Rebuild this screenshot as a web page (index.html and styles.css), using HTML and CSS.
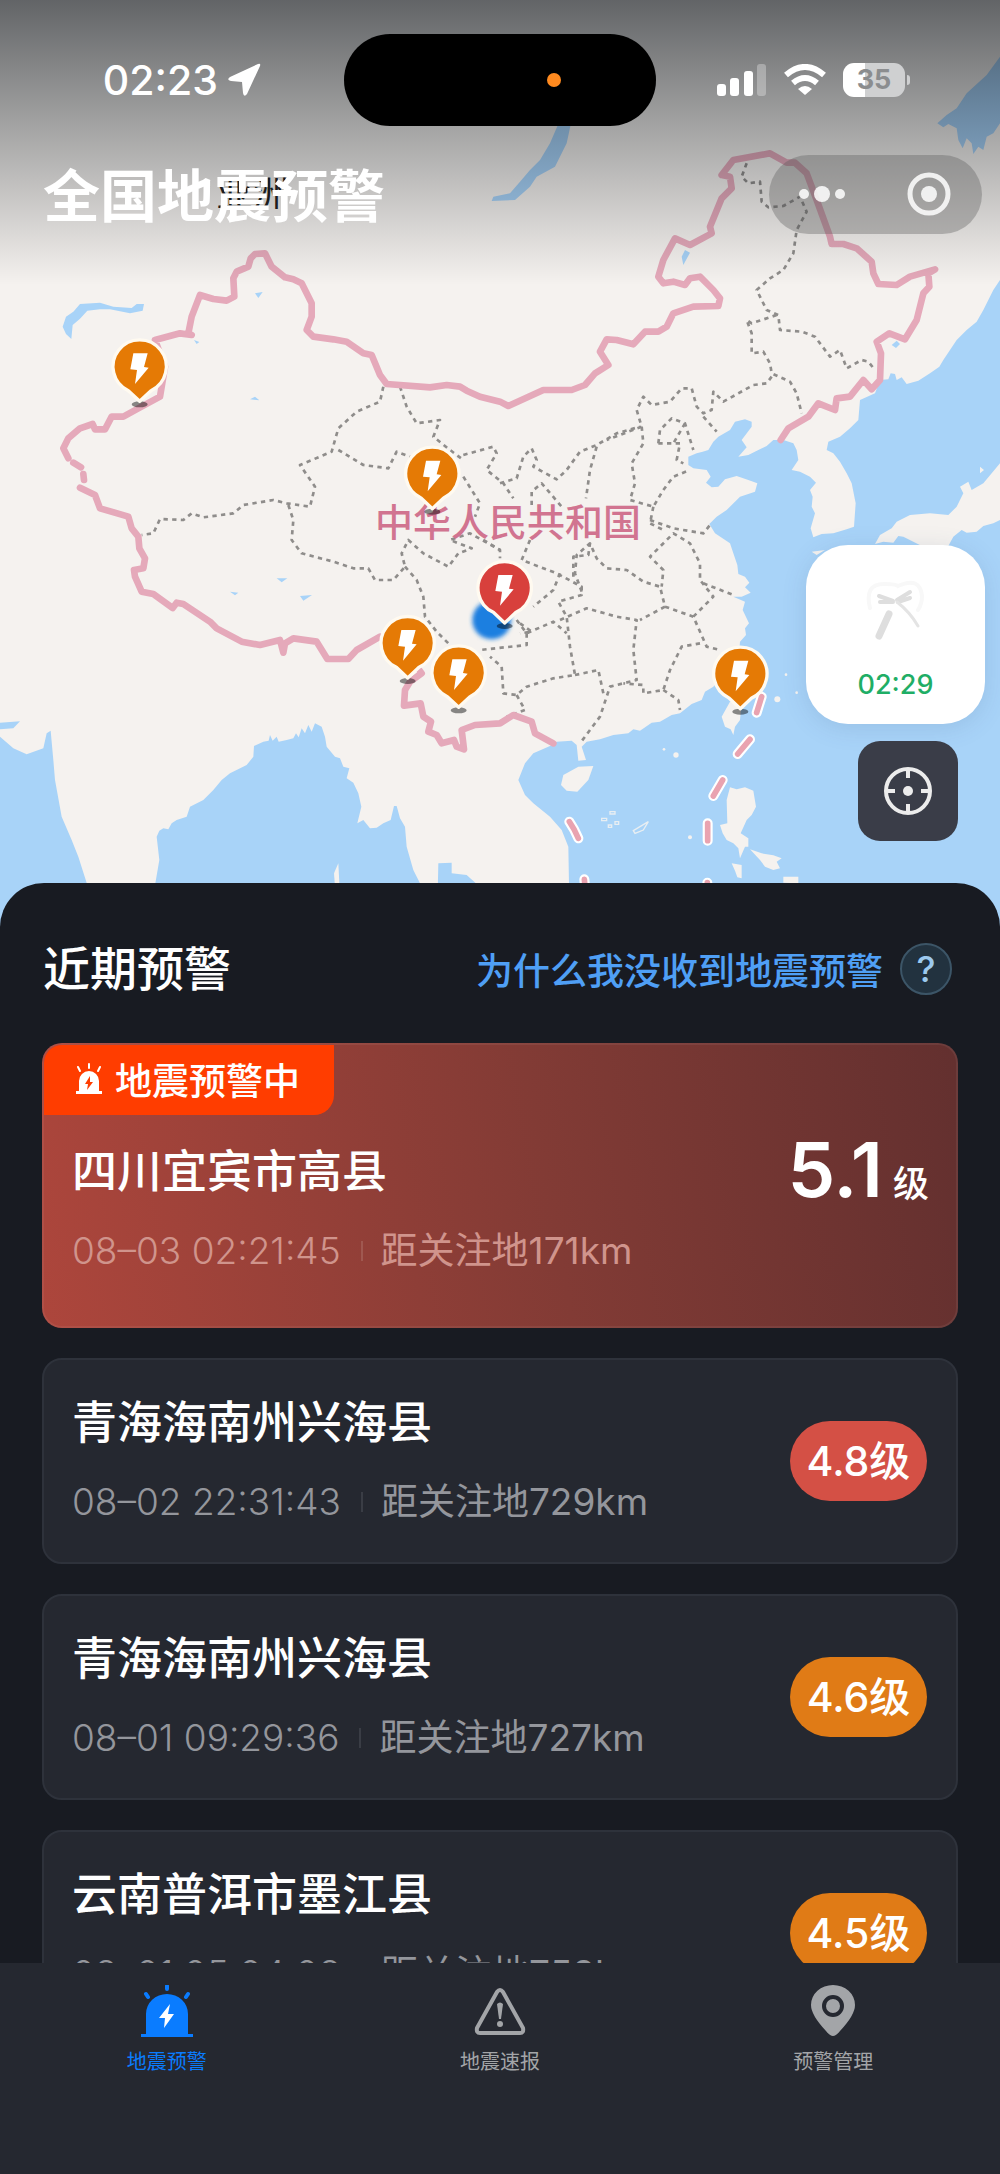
FILE: index.html
```html
<!DOCTYPE html>
<html lang="zh-CN">
<head>
  <meta charset="UTF-8">
  <meta name="viewport" content="width=device-width, initial-scale=1.0">
  <title>全国地震预警</title>
  <link rel="stylesheet" href="styles.css">
</head>
<body>
  <header class="map">
    <svg class="map-canvas" viewBox="0 0 3000 2820" aria-hidden="true">
      <defs>
        <g id="pin">
          <ellipse cx="0" cy="113" rx="24" ry="9" fill="#000" opacity="0.45"/>
          <path d="M0 104 L-34 72 A80 80 0 1 1 34 72 Z" fill="currentColor" stroke="#fffaf0" stroke-width="10" stroke-linejoin="round"/>
          <path d="M-19 -40 L24 -40 L13 1 L27 3 L-14 52 L-8 10 L-28 8 Z" fill="#fff"/>
        </g>
        <filter id="soft"><feGaussianBlur stdDeviation="6"/></filter>
      </defs>
      <rect width="3000" height="2820" fill="#f5f2ef"/>

      <!-- seas and lakes -->
      <g fill="#a8d3f8">
        <path d="M3000 170 L2960 225 L2900 280 L2870 325 L2840 345 L2812 370 L2830 382 L2845 372 L2870 385 L2875 420 L2888 445 L2900 415 L2915 430 L2920 462 L2935 440 L2950 450 L2960 410 L2980 400 L3000 370 Z"/>
        <path d="M1680 360 L1715 360 L1700 430 L1665 500 L1610 530 L1590 560 L1545 600 L1475 603 L1480 590 L1530 580 L1560 545 L1590 510 L1620 480 L1650 430 Z"/>
        <g transform="translate(0 660)">
          <path d="M188 320 L198 290 L220 275 L240 252 L300 248 L340 260 L395 264 L410 252 L432 252 L428 272 L390 280 L330 268 L300 268 L262 272 L240 296 L218 315 L214 357 L198 342 Z"/>
          <path d="M765 220 L788 216 L775 234 Z M750 538 L765 530 L778 541 Z M830 1075 L862 1075 L845 1087 Z M900 1128 L936 1125 L910 1142 Z M582 360 L598 366 L590 372 Z M690 1115 L715 1118 L705 1126 Z"/>
        </g>
        <path d="M2045 770 L2055 750 L2070 758 L2050 795 Z M2675 1035 L2690 1022 L2700 1032 L2688 1044 Z"/>
        <g transform="translate(0 1680)">
          <path d="M0 488 L60 484 L40 505 L0 508 Z"/>
          <path d="M0 530 L40 565 L80 583 L130 565 L140 520 L152 512 L160 600 L165 660 L185 770 L215 840 L235 890 L262 975 L290 1140 L0 1140 Z"/>
          <path d="M466 1140 L466 970 L478 900 L470 830 L478 812 L490 805 L505 808 L515 790 L530 780 L560 770 L570 740 L610 720 L640 690 L665 660 L690 640 L740 615 L760 590 L762 558 L790 545 L806 542 L810 525 L818 542 L830 530 L836 545 L860 540 L880 535 L888 520 L896 532 L905 505 L915 520 L925 495 L935 515 L945 490 L965 500 L975 530 L980 560 L1005 590 L1020 595 L1030 620 L1048 625 L1040 655 L1060 668 L1075 700 L1084 740 L1072 790 L1090 780 L1110 805 L1130 803 L1150 790 L1172 780 L1182 738 L1190 738 L1200 775 L1215 800 L1220 860 L1240 930 L1260 970 L1265 1140 Z"/>
          <path d="M1315 910 L1355 908 L1355 940 L1400 945 L1430 972 L1440 1140 L1310 1140 Z"/>
        </g>
        <path transform="translate(1500 1500)" d="M1500 -660 L1480 -630 L1450 -570 L1430 -535 L1400 -510 L1370 -480 L1330 -420 L1318 -400 L1290 -380 L1255 -358 L1220 -348 L1205 -368 L1190 -360 L1185 -378 L1172 -380 L1165 -362 L1140 -360 L1125 -320 L1080 -300 L1075 -240 L1050 -215 L1020 -190 L985 -175 L980 -150 L1000 -140 L1020 -115 L1040 -80 L1055 -50 L1067 10 L1062 80 L1040 88 L1000 100 L965 102 L940 112 L932 85 L945 40 L935 20 L938 -10 L930 -30 L948 -52 L930 -70 L900 -85 L875 -90 L895 -120 L890 -150 L880 -170 L850 -180 L820 -180 L800 -162 L775 -150 L745 -135 L715 -130 L740 -158 L725 -180 L755 -220 L755 -235 L735 -242 L705 -235 L690 -210 L655 -190 L640 -175 L625 -150 L608 -145 L590 -140 L565 -130 L565 -105 L580 -95 L620 -90 L632 -70 L618 -52 L635 -38 L655 -40 L675 -62 L710 -72 L745 -60 L772 -50 L765 -25 L720 -10 L680 30 L650 50 L628 72 L645 100 L690 130 L700 160 L712 195 L715 222 L735 230 L748 248 L735 262 L752 278 L725 290 L700 290 L735 305 L728 330 L747 370 L735 385 L738 405 L720 425 L718 450 L700 480 L665 530 L640 560 L615 575 L605 600 L575 612 L540 640 L515 645 L480 665 L455 668 L420 692 L400 688 L385 700 L340 705 L300 718 L260 725 L245 740 L258 780 L235 782 L230 735 L215 722 L170 725 L150 738 L100 760 L75 790 L55 840 L75 885 L100 910 L150 950 L185 990 L205 1040 L210 1320 L1500 1320 Z"/>
      </g>

      <!-- islands and Japan -->
      <g transform="translate(1500 1500)" fill="#f5f2ef">
        <path d="M1500 -110 L1450 -50 L1415 -30 L1405 -55 L1380 -40 L1390 -20 L1370 20 L1345 45 L1290 40 L1230 45 L1190 65 L1175 85 L1140 105 L1125 132 L1150 125 L1180 128 L1195 108 L1210 110 L1240 125 L1270 140 L1300 135 L1345 138 L1360 110 L1385 90 L1400 98 L1430 95 L1450 78 L1480 70 L1500 60 Z"/>
        <path d="M235 800 L280 798 L265 840 L232 875 L200 872 L183 855 L190 825 Z"/>
        <path d="M665 650 L690 605 L725 610 L720 660 L705 680 L700 705 L692 688 L675 680 Z"/>
        <path d="M690 862 L710 868 L735 862 L760 872 L768 920 L755 945 L740 960 L722 1000 L745 1015 L745 1040 L735 1040 L720 1075 L715 1045 L700 1030 L680 1020 L668 1000 L660 975 L682 970 L680 900 Z"/>
        <path d="M695 1090 L725 1095 L725 1135 L712 1132 L705 1112 Z M750 1048 L785 1060 L820 1066 L845 1075 L830 1085 L840 1105 L820 1110 L795 1100 L780 1080 Z M850 1130 L895 1130 L895 1150 L850 1148 Z M935 155 L975 150 L950 165 Z M1440 -100 L1452 -90 L1440 -80 Z"/>
        <circle cx="528" cy="765" r="8"/>
        <circle cx="492" cy="748" r="4"/>
        <circle cx="570" cy="1012" r="6"/>
        <circle cx="832" cy="598" r="9"/>
        <circle cx="858" cy="524" r="4"/>
        <circle cx="890" cy="578" r="4"/>
        <path d="M400 992 L445 965 L430 990 L405 1000 Z M305 955 H320 V962 H305 Z M330 935 H345 V942 H330 Z M345 965 H356 V973 H345 Z M325 975 H335 V982 H325 Z" fill="none" stroke="#e8eef2" stroke-width="4"/>
        <path d="M-485 1090 L-482 1150 L-495 1160 L-498 1120 Z"/>
      </g>

      <!-- province borders -->
      <g class="province">
        <g transform="translate(0 660)">
          <path d="M1150 500 L1140 545 L1070 575 L1015 625 L995 695 L900 735 L945 800 L930 860 L860 850 L820 840 L730 855 L700 880 L610 892 L575 880 L550 900 L480 897 L460 940 L425 945"/>
          <path d="M865 855 L880 900 L875 960 L905 1000 L1000 1025 L1060 1045 L1105 1045 L1125 1080 L1180 1080 L1215 1040 L1205 1000 L1225 960 L1270 1000 L1345 1040 L1375 1000 L1415 985 L1350 960 L1410 940 L1500 990"/>
          <path d="M1200 500 L1220 560 L1250 610 L1320 600 L1300 650 L1350 690 L1390 720"/>
          <path d="M1015 690 L1090 735 L1165 745 L1190 695 L1230 710"/>
          <path d="M1390 770 L1440 850 L1425 890"/>
          <path d="M1215 1040 L1250 1080 L1270 1130 L1275 1190 L1310 1235 L1345 1270"/>
        </g>
        <g transform="translate(1020 1260)">
          <path d="M370 105 L460 80 L470 100 L440 150 L490 190 L520 235"/>
          <path d="M480 190 L530 175 L550 110 L575 85 L590 120 L580 140 L650 178 L680 150 L720 95 L770 75 L830 40 L900 20"/>
          <path d="M770 80 L750 150 L738 235"/>
          <path d="M575 255 L575 215 L605 190 L665 260"/>
          <path d="M570 360 L545 420 L650 460 L725 500 L725 525 L655 545 L680 590 L690 680 L705 765 L640 775 L560 800 L530 825 L490 820 L485 740 L450 710"/>
          <path d="M660 460 L640 510 L580 560"/>
          <path d="M530 600 L560 640 L640 605 L680 640"/>
          <path d="M560 640 L560 675 L420 690"/>
          <path d="M660 600 L740 565 L830 590 L890 600 L880 690 L890 780 L810 800 L780 890 L720 970"/>
          <path d="M705 765 L775 750 L790 820"/>
          <path d="M530 825 L555 870 L500 890"/>
          <path d="M540 610 L575 635 L540 640"/>
          <path d="M430 360 L480 390 L480 415"/>
          <path d="M700 470 L700 410 L745 405 L750 370"/>
        </g>
        <g transform="translate(1500 1500)">
          <path d="M245 275 L225 220 L230 165 L270 130 L290 175 L320 205 L380 210 L430 245 L480 260 L495 320 L420 360"/>
          <path d="M495 320 L580 350 L620 440 L660 450"/>
          <path d="M600 430 L545 440 L510 510 L490 570 L430 580 L430 555 L370 550"/>
          <path d="M490 570 L535 600 L540 630"/>
          <path d="M580 350 L640 290 L600 240 L600 190 L570 130 L520 100 L450 170 L490 210 L485 260"/>
          <path d="M450 60 L520 85 L610 100 L630 75"/>
          <path d="M610 250 L700 285"/>
        </g>
        <g transform="translate(1500 390)">
          <path d="M740 100 L725 140 L745 160 L780 155 L785 215 L805 232 L850 228 L900 200 L920 245 L890 300 L880 370 L850 420 L810 445 L770 480 L800 540 L835 555 L840 600 L905 605 L945 620 L990 680 L1020 660 L1040 715 L1085 690 L1105 695 L1125 720"/>
          <path d="M830 555 L755 580 L740 570 L755 610 L755 670 L790 665 L810 700 L815 730 L870 755 L890 790 L905 850"/>
          <path d="M815 740 L800 760 L760 765 L670 815 L640 785 L635 840 L610 850 L590 830 L575 775 L545 775 L510 815 L455 825 L430 800 L410 840 L425 890 L320 930"/>
          <path d="M610 860 L650 905"/>
          <path d="M425 890 L430 940 L395 1000 L405 1060 L390 1110 L460 1130 L490 1080 L520 1040 L570 1020"/>
          <path d="M475 940 L480 900 L515 865 L555 880 L580 960"/>
          <path d="M475 940 L540 940 L530 990 L550 1000 M555 880 L520 940"/>
          <path d="M460 1130 L450 1180 L490 1200"/>
        </g>
      </g>

      <!-- national border -->
      <g class="border">
        <path d="M2342 1320 L2365 1285 L2425 1250 L2455 1210 L2505 1230 L2510 1195 L2550 1190 L2590 1140 L2615 1168 L2640 1140 L2643 1060 L2630 1025 L2668 1000 L2715 1018 L2750 960 L2770 880 L2788 860 L2785 820 L2805 808 L2730 830 L2690 855 L2635 852 L2620 820 L2615 785 L2570 745 L2530 732 L2495 732 L2490 710 L2450 600 L2420 520 L2385 488 L2360 488 L2310 460 L2200 480 L2165 525 L2190 530 L2195 565 L2165 595 L2130 680 L2135 700 L2070 735 L2025 715 L1990 780 L1975 830 L1990 850 L2020 845 L2055 855 L2070 835 L2100 830 L2140 870 L2160 895 L2155 918 L2080 920 L2020 940 L2000 980 L1975 995 L1935 995 L1900 1033 L1850 1020 L1820 1018 L1800 1055 L1825 1095 L1785 1120 L1755 1155 L1715 1170 L1630 1170 L1525 1218 L1500 1205 L1440 1190 L1400 1172 L1380 1160 L1340 1155 L1290 1162 L1160 1152 L1140 1125 L1115 1065 L1090 1060 L1040 1025 L1000 1018 L940 1010 L920 990 L935 950 L935 910 L905 850 L880 838 L855 832 L815 800 L795 760 L765 762 L752 775 L745 800 L710 815 L700 835 L703 890 L680 902 L640 897 L600 885 L575 950 L565 1000 L575 1005 L540 1000 L465 1020 L495 1100 L480 1190 L415 1225 L370 1250 L335 1250 L315 1288 L285 1288 L278 1272 L240 1285 L205 1315 L190 1345 L205 1375"/>
        <path d="M220 1388 L243 1402 M250 1422 L252 1440"/>
        <path d="M240 1463 L285 1485 L300 1525 L385 1550 L395 1585 L415 1610 L418 1645 L435 1675 L430 1705 L402 1710 L405 1730 L425 1775 L460 1782 L518 1824 L530 1808 L550 1812 L630 1865 L650 1885 L725 1925 L780 1935 L840 1920 L850 1958 L855 1930 L880 1915 L950 1925 L982 1977 L1045 1977 L1070 1950 L1140 1910 L1200 1930 L1265 2020 L1230 2045 L1215 2070 L1212 2117 L1262 2110 L1270 2150 L1293 2165 L1285 2195 L1310 2205 L1325 2230 L1362 2220 L1370 2240 L1392 2248 L1385 2190 L1425 2175 L1500 2170 L1540 2145 L1595 2165 L1605 2200 L1660 2230"/>
      </g>
      <g transform="translate(1500 1500)">
        <path class="dash-case" d="M785 590 L770 638 M750 718 L713 762 M668 840 L640 888 M623 970 L623 1022 M208 965 Q222 985 235 1015 M253 1138 L258 1190 M622 1148 L622 1190"/>
        <path class="dash" d="M785 590 L770 638 M750 718 L713 762 M668 840 L640 888 M623 970 L623 1022 M208 965 Q222 985 235 1015 M253 1138 L258 1190 M622 1148 L622 1190"/>
      </g>

      <text class="country" x="1125" y="1607">中华人民共和国</text>
      <text class="continent" x="650" y="620">亚洲</text>

      <circle cx="1475" cy="1860" r="58" fill="#1f7fe0" filter="url(#soft)"/>
      <g color="#e57a05">
        <use href="#pin" x="419" y="1100"/>
        <use href="#pin" x="1297" y="1422"/>
        <use href="#pin" x="1223" y="1930"/>
        <use href="#pin" x="1376" y="2018"/>
        <use href="#pin" x="2221" y="2022"/>
      </g>
      <use href="#pin" x="1514" y="1765" color="#d8403c"/>
    </svg>

    <div class="map-top">
      <div class="status-bar">
        <div class="status-time">
          <span>02:23</span>
          <svg width="34" height="34" viewBox="0 0 34 34"><path d="M31 1 Q34 0 33 3 L20 31 Q17 35 16 30 L15 19 L4 18 Q-1 17 3 14 Z" fill="#fff"/></svg>
        </div>
        <div class="island"><span class="island-dot"></span></div>
        <div class="status-icons">
          <svg width="50" height="32" viewBox="0 0 50 32" fill="#fff">
            <rect x="0" y="20" width="9" height="12" rx="3"/>
            <rect x="13" y="14" width="9" height="18" rx="3"/>
            <rect x="27" y="7" width="9" height="25" rx="3"/>
            <rect x="40" y="0" width="9" height="32" rx="3" opacity="0.3"/>
          </svg>
          <svg width="42" height="32" viewBox="0 0 42 32" fill="none" stroke="#fff" stroke-width="6">
            <path d="M2 11 Q21 -5 40 11"/>
            <path d="M9 19 Q21 9 33 19"/>
            <path d="M21 31 L14 25 Q21 19 28 25 Z" fill="#fff" stroke="none"/>
          </svg>
          <div class="battery"><span>35</span></div>
        </div>
      </div>
      <div class="title-bar">
        <h1>全国地震预警</h1>
        <div class="capsule">
          <button class="capsule-btn" aria-label="更多">
            <svg width="48" height="18" viewBox="0 0 48 18" fill="#fff"><circle cx="6" cy="9" r="5"/><circle cx="24" cy="9" r="8"/><circle cx="42" cy="9" r="5"/></svg>
          </button>
          <button class="capsule-btn" aria-label="关闭">
            <svg width="44" height="44" viewBox="0 0 44 44"><circle cx="22" cy="22" r="19" fill="none" stroke="#fff" stroke-width="5"/><circle cx="22" cy="22" r="8" fill="#fff"/></svg>
          </button>
        </div>
      </div>
    </div>

    <div class="float-tools">
      <div class="call-card">
        <svg width="60" height="64" viewBox="0 0 60 64" fill="none" stroke-linecap="round">
          <path d="M27 23 L13 18 M14 24 L27 24 M31 22 L44 14 M32 24 L44 20" stroke="#dedede" stroke-width="4"/>
          <path d="M23 36 L13 58" stroke="#dedede" stroke-width="7"/>
          <path d="M31 24 Q44 34 52 48" stroke="#e4e4e4" stroke-width="3"/>
          <path d="M4 30 Q-2 6 18 6 Q30 6 32 8 Q54 -2 56 18 Q56 26 52 32" stroke="#f8f8f8" stroke-width="4"/>
        </svg>
        <span>02:29</span>
      </div>
      <button class="locate-btn" aria-label="定位">
        <svg width="50" height="50" viewBox="0 0 50 50" fill="none" stroke="#ececec" stroke-width="4">
          <circle cx="25" cy="25" r="22"/>
          <path d="M25 3 V12 M25 38 V47 M3 25 H12 M38 25 H47"/>
          <circle cx="25" cy="25" r="5" fill="#ececec" stroke="none"/>
        </svg>
      </button>
    </div>
  </header>

  <main class="panel">
    <div class="panel-head">
      <h2>近期预警</h2>
      <a href="#" class="why-link">为什么我没收到地震预警<span class="help">?</span></a>
    </div>

    <ul class="list">
      <li class="card alert">
        <div class="badge">
          <svg width="28" height="32" viewBox="0 0 28 32">
            <path d="M4 28 V18 A10 10 0 0 1 24 18 V28 H27 V31 H1 V28 Z" fill="#fff"/>
            <path d="M14 1 V5 M3 4 L5 8 M25 4 L23 8" stroke="#fff" stroke-width="2" stroke-linecap="round"/>
            <path d="M15 13 L10 21 H13 L12 27 L18 19 H15 Z" fill="#ff3d00"/>
          </svg>
          地震预警中
        </div>
        <div class="card-body">
          <div class="info">
            <h3>四川宜宾市高县</h3>
            <p class="meta"><time>08–03 02:21:45</time><span>距关注地171km</span></p>
          </div>
          <div class="magnitude">5.1<small>级</small></div>
        </div>
      </li>
      <li class="card">
        <div class="card-body">
          <div class="info">
            <h3>青海海南州兴海县</h3>
            <p class="meta"><time>08–02 22:31:43</time><span>距关注地729km</span></p>
          </div>
          <div class="pill red">4.8级</div>
        </div>
      </li>
      <li class="card">
        <div class="card-body">
          <div class="info">
            <h3>青海海南州兴海县</h3>
            <p class="meta"><time>08–01 09:29:36</time><span>距关注地727km</span></p>
          </div>
          <div class="pill">4.6级</div>
        </div>
      </li>
      <li class="card">
        <div class="card-body">
          <div class="info">
            <h3>云南普洱市墨江县</h3>
            <p class="meta"><time>08–01 05:04:08</time><span>距关注地758km</span></p>
          </div>
          <div class="pill">4.5级</div>
        </div>
      </li>
    </ul>
  </main>

  <nav class="tab-bar">
    <a href="#" class="tab active">
      <svg width="54" height="54" viewBox="0 0 54 54">
        <path d="M6 49 V29 A21 20 0 0 1 48 29 V49 H53 V52 H1 V49 Z" fill="#0a7cff"/>
        <path d="M27 1 V4 M6 9 L8 12 M48 9 L46 12" stroke="#0a7cff" stroke-width="4" stroke-linecap="round"/>
        <path d="M30 19 L19 33 H25 L24 43 L34 29 H28 Z" fill="#fff"/>
      </svg>
      地震预警
    </a>
    <a href="#" class="tab">
      <svg width="54" height="54" viewBox="0 0 54 54" fill="none" stroke="#a3a5a8" stroke-linejoin="round">
        <path d="M24 7 Q27 3 30 7 L50 43 Q51 48 47 48 H7 Q3 48 4 43 Z" stroke-width="4"/>
        <path d="M24 19 Q27 16 30 19 L28 34 H26 Z" fill="#a3a5a8" stroke="none"/>
        <circle cx="27" cy="39" r="3" fill="#a3a5a8" stroke="none"/>
      </svg>
      地震速报
    </a>
    <a href="#" class="tab">
      <svg width="54" height="54" viewBox="0 0 54 54">
        <path d="M27 51 Q24 51 20 46 Q5 30 5 20 A22 20 0 0 1 49 20 Q49 30 34 46 Q30 51 27 51 Z" fill="#a3a5a8"/>
        <circle cx="27" cy="21" r="9" fill="none" stroke="#252830" stroke-width="4"/>
      </svg>
      预警管理
    </a>
  </nav>
</body>
</html>
```
FILE: styles.css
```css
* {
  box-sizing: border-box;
}

body {
  display: flex;
  flex-direction: column;
  height: 100vh;
  margin: 0;
  overflow: hidden;
  background: #181b22;
  color: #fff;
  font-family: Inter, "Noto Sans CJK SC", sans-serif;
}

h1, h2, h3, p, ul {
  margin: 0;
  padding: 0;
}

a {
  text-decoration: none;
}

button {
  border: none;
  padding: 0;
  cursor: pointer;
}

svg {
  display: block;
}

/* Map */
.map {
  position: relative;
  flex: none;
}

.map-canvas {
  width: 100%;
}

.province {
  fill: none;
  stroke: #8f8d8b;
  stroke-width: 8;
  stroke-dasharray: 13 13;
  stroke-linejoin: round;
}

.border {
  fill: none;
  stroke: #e5a9ba;
  stroke-width: 20;
  stroke-linejoin: round;
  stroke-linecap: round;
}

.dash-case {
  fill: none;
  stroke: #fff;
  stroke-width: 30;
  stroke-linecap: round;
}

.dash {
  fill: none;
  stroke: #e9a3b0;
  stroke-width: 17;
  stroke-linecap: round;
}

.country {
  font-size: 114px;
  font-weight: 500;
  fill: #d17490;
}

.continent {
  font-size: 108px;
  fill: #222;
}

.map-top {
  position: absolute;
  top: 0;
  left: 0;
  right: 0;
  height: 285px;
  padding-top: 34px;
  background: linear-gradient(rgba(0, 6, 12, 0.6), rgba(0, 6, 12, 0));
}

.status-bar {
  display: grid;
  grid-template-columns: 1fr 312px 1fr;
  align-items: center;
  height: 92px;
}

.status-time {
  display: flex;
  align-items: center;
  justify-content: flex-end;
  gap: 9px;
  padding-right: 83px;
  font-size: 41px;
  font-weight: 500;
}

.island {
  display: flex;
  align-items: center;
  justify-content: flex-end;
  height: 92px;
  padding-right: 95px;
  border-radius: 46px;
  background: #000;
}

.island-dot {
  width: 14px;
  height: 14px;
  border-radius: 50%;
  background: #ff8a1f;
}

.status-icons {
  display: flex;
  align-items: center;
  gap: 17px;
  padding-left: 61px;
}

.battery {
  position: relative;
  width: 62px;
  height: 34px;
  border-radius: 11px;
  background: linear-gradient(90deg, #fff 35%, #cfd0d1 35%);
  color: #8b8d8f;
  font-size: 27px;
  font-weight: 700;
  line-height: 34px;
  text-align: center;
}

.battery::after {
  content: "";
  position: absolute;
  top: 12px;
  right: -5px;
  width: 3px;
  height: 10px;
  border-radius: 0 3px 3px 0;
  background: #cfd0d1;
}

.title-bar {
  display: flex;
  align-items: center;
  justify-content: space-between;
  margin-top: 28px;
  padding: 0 18px 0 43px;
}

.title-bar h1 {
  padding-top: 6px;
  font-size: 57px;
  font-weight: 700;
  line-height: 74px;
}

.capsule {
  display: flex;
  width: 213px;
  height: 79px;
  border-radius: 40px;
  background: rgba(90, 90, 90, 0.35);
}

.capsule-btn {
  display: flex;
  flex: 1;
  align-items: center;
  justify-content: center;
  background: none;
  opacity: 0.85;
}

.float-tools {
  position: absolute;
  top: 545px;
  right: 15px;
  display: flex;
  flex-direction: column;
  align-items: flex-end;
  gap: 17px;
}

.call-card {
  display: flex;
  flex-direction: column;
  align-items: center;
  gap: 26px;
  width: 179px;
  height: 179px;
  padding-top: 33px;
  border-radius: 42px;
  background: #fff;
  box-shadow: 0 4px 24px rgba(60, 90, 130, 0.15);
  color: #1fae66;
  font-size: 27px;
  font-weight: 500;
}

.locate-btn {
  display: flex;
  align-items: center;
  justify-content: center;
  width: 100px;
  height: 100px;
  margin-right: 27px;
  border-radius: 22px;
  background: #3a3d48;
}

/* Warning list */
.panel {
  position: relative;
  flex: 1;
  min-height: 0;
  margin-top: -57px;
  padding: 56px 42px 0;
  overflow: hidden;
  border-radius: 44px 44px 0 0;
  background: #181b22;
}

.panel-head {
  display: flex;
  align-items: center;
  justify-content: space-between;
  height: 60px;
  padding: 0 6px 0 1px;
}

.panel-head h2 {
  font-size: 47px;
  font-weight: 500;
  line-height: 60px;
}

.why-link {
  display: flex;
  align-items: center;
  gap: 17px;
  color: #4f9ff5;
  font-size: 37px;
  font-weight: 500;
}

.help {
  width: 52px;
  height: 52px;
  border: 2px solid #3c5567;
  border-radius: 50%;
  background: #22323f;
  color: #9cc9ee;
  font-size: 36px;
  line-height: 48px;
  text-align: center;
}

.list {
  display: flex;
  flex-direction: column;
  gap: 30px;
  margin-top: 44px;
  list-style: none;
}

.card {
  border: 2px solid #2e323b;
  border-radius: 20px;
  background: #252830;
}

.card-body {
  display: flex;
  align-items: center;
  justify-content: space-between;
  padding: 33px 29px 33px 28px;
}

.card h3 {
  font-size: 45px;
  font-weight: 500;
  line-height: 60px;
}

.meta {
  display: flex;
  align-items: center;
  margin-top: 24px;
  color: #94969c;
  font-size: 37px;
  font-weight: 400;
  line-height: 50px;
}

.card-body .info {
  padding-bottom: 2px;
}

.meta time {
  font-weight: 300;
}

.meta span {
  display: flex;
  align-items: center;
}

.meta span::before {
  content: "";
  width: 2px;
  height: 20px;
  margin: 0 18px 0 20px;
  background: #3a3d45;
}

.pill {
  flex: none;
  width: 137px;
  border-radius: 40px;
  background: #e07b16;
  font-size: 41px;
  font-weight: 500;
  line-height: 80px;
  text-align: center;
}

.pill.red {
  background: #d45045;
}

.alert {
  border-color: rgba(255, 255, 255, 0.06);
  background: linear-gradient(80deg, #ad463c, #823b35 55%, #63302f) border-box;
  overflow: hidden;
}

.alert .card-body {
  align-items: flex-start;
  padding: 27px 27px 48px 28px;
}

.alert .meta {
  color: #d0948c;
}

.alert .meta span::before {
  background: #a05850;
}

.badge {
  display: flex;
  align-items: center;
  gap: 12px;
  width: 292px;
  height: 72px;
  margin: -2px 0 0 -2px;
  padding-left: 33px;
  border-bottom-right-radius: 20px;
  background: #ff3d00;
  font-size: 37px;
  font-weight: 500;
}

.magnitude {
  display: flex;
  align-items: baseline;
  gap: 10px;
  font-size: 76px;
  font-weight: 600;
  line-height: 54px;
}

.magnitude small {
  font-size: 36px;
  font-weight: 500;
}

/* Bottom navigation */
.tab-bar {
  display: flex;
  flex: none;
  height: 211px;
  padding-top: 22px;
  background: #252830;
}

.tab {
  display: flex;
  flex: 1;
  flex-direction: column;
  align-items: center;
  gap: 9px;
  color: #a3a5a8;
  font-size: 20px;
  line-height: 28px;
}

.tab.active {
  color: #0a7cff;
}
```
